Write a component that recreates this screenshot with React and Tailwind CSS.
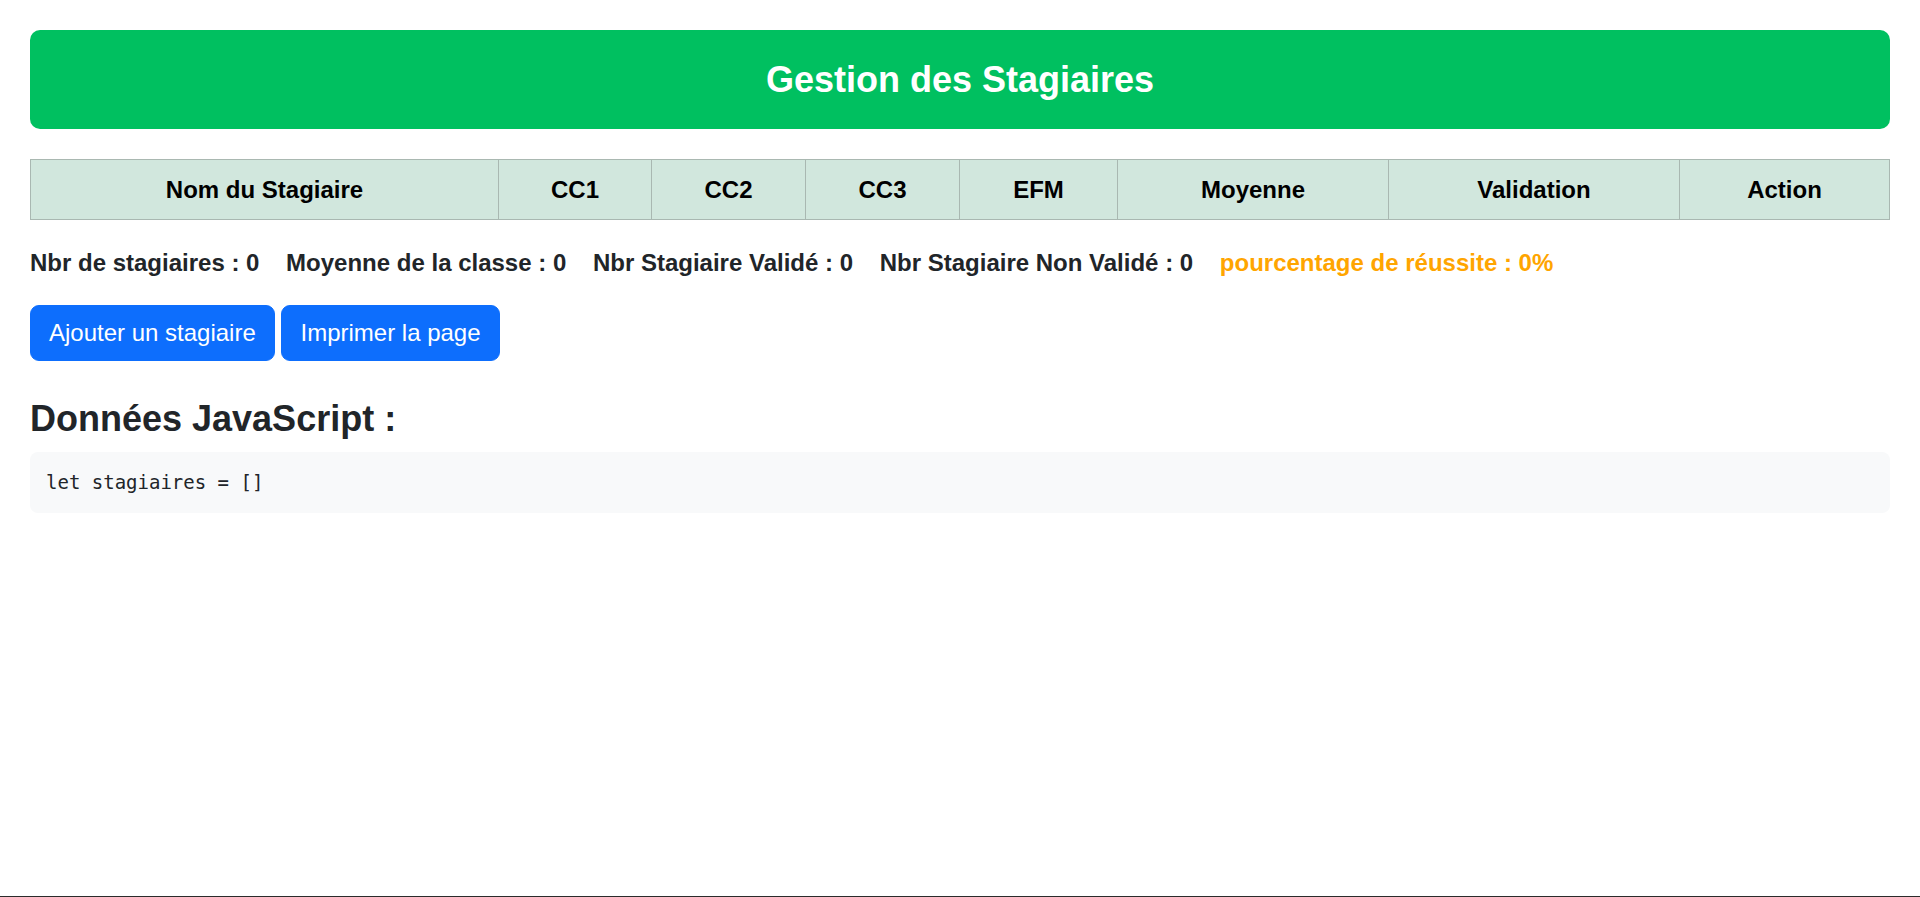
import React from "react";

const cols = ["Nom du Stagiaire", "CC1", "CC2", "CC3", "EFM", "Moyenne", "Validation", "Action"];

export default function App() {
  return (
    <div
      className="flex h-[897px] flex-col bg-white text-[#212529]"
      style={{ fontFamily: '"Liberation Sans", Arial, sans-serif' }}
    >
      <div className="flex flex-col px-[30px] pt-[30px]">
        <div className="flex h-[99px] items-center justify-center rounded-[10px] bg-[#00c060]">
          <h1 className="text-[36px] font-bold leading-[43px] text-white">Gestion des Stagiaires</h1>
        </div>

        <div className="mt-[30px] grid grid-cols-[468px_153px_154px_154px_158px_271px_291px_1fr] border border-[#a9b8b1] bg-[#d1e7dd]">
          {cols.map((c, i) => (
            <div
              key={c}
              className={`flex h-[59px] items-center justify-center text-[24px] font-bold leading-[36px] text-black ${
                i < cols.length - 1 ? "border-r border-[#a9b8b1]" : ""
              }`}
            >
              {c}
            </div>
          ))}
        </div>

        <div className="mt-[25px] flex h-[36px] items-center gap-[26.7px] text-[24px] font-bold leading-[36px]">
          <span>Nbr de stagiaires : 0</span>
          <span>Moyenne de la classe : 0</span>
          <span>Nbr Stagiaire Validé : 0</span>
          <span>Nbr Stagiaire Non Validé : 0</span>
          <span className="text-[#ffa500]">pourcentage de réussite : 0%</span>
        </div>

        <div className="mt-[24px] flex gap-[6.7px]">
          <button className="h-[56px] rounded-[9px] border border-[#0d6efd] bg-[#0d6efd] px-[18px] text-[24px] leading-[36px] text-white">
            Ajouter un stagiaire
          </button>
          <button className="h-[56px] rounded-[9px] border border-[#0d6efd] bg-[#0d6efd] px-[18px] text-[24px] leading-[36px] text-white">
            Imprimer la page
          </button>
        </div>

        <h2 className="mt-[36px] text-[36px] font-bold leading-[43px] text-[#212529]">Données JavaScript :</h2>

        <pre
          className="mt-[12px] flex h-[61px] items-center rounded-[8px] bg-[#f8f9fa] px-[16px] text-[19px] text-[#212529]"
          style={{ fontFamily: '"DejaVu Sans Mono", "Liberation Mono", monospace' }}
        >
          let stagiaires = []
        </pre>
      </div>
      <div className="mt-auto h-px bg-[#2b2b2b]" />
    </div>
  );
}
